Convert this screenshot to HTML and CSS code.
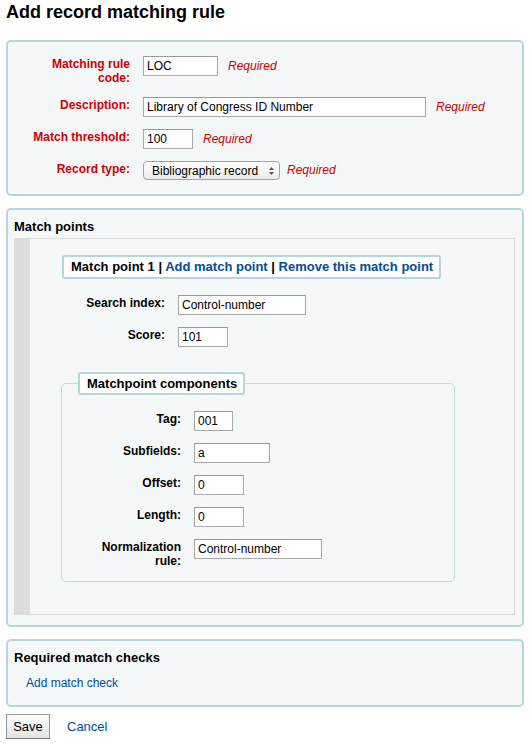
FILE: index.html
```html
<!DOCTYPE html>
<html>
<head>
<meta charset="utf-8">
<title>Add record matching rule</title>
<link rel="stylesheet" href="styles.css">
</head>
<body>
<h1 class="page-title">Add record matching rule</h1>

<div class="panel panel-rule">
  <ol class="rows rows-rule">
    <li class="row"><label class="lbl lbl-req">Matching rule code:</label><input class="inp w-code" type="text" value="LOC"><span class="required">Required</span></li>
    <li class="row"><label class="lbl lbl-req">Description:</label><input class="inp w-desc" type="text" value="Library of Congress ID Number"><span class="required">Required</span></li>
    <li class="row"><label class="lbl lbl-req">Match threshold:</label><input class="inp w-num" type="text" value="100"><span class="required">Required</span></li>
    <li class="row"><label class="lbl lbl-req">Record type:</label><span class="select"><span>Bibliographic record</span><svg class="select-arrows" width="5" height="8" viewBox="0 0 5 8"><polygon points="0,3 2.5,0 5,3" fill="#555"/><polygon points="0,5 2.5,8 5,5" fill="#555"/></svg></span><span class="required req-select">Required</span></li>
  </ol>
</div>

<div class="panel panel-points">
  <h3 class="panel-title">Match points</h3>
  <div class="mp-box">
    <div class="mp-heading">Match point 1 | <a href="#" class="link">Add match point</a> | <a href="#" class="link">Remove this match point</a></div>
    <ol class="rows rows-mp">
      <li class="row"><label class="lbl">Search index:</label><input class="inp w-index" type="text" value="Control-number"></li>
      <li class="row"><label class="lbl">Score:</label><input class="inp w-num" type="text" value="101"></li>
    </ol>
    <fieldset class="components">
      <legend class="comp-legend">Matchpoint components</legend>
      <ol class="rows rows-comp">
        <li class="row"><label class="lbl">Tag:</label><input class="inp w-tag" type="text" value="001"></li>
        <li class="row"><label class="lbl">Subfields:</label><input class="inp w-sub" type="text" value="a"></li>
        <li class="row"><label class="lbl">Offset:</label><input class="inp w-num" type="text" value="0"></li>
        <li class="row"><label class="lbl">Length:</label><input class="inp w-num" type="text" value="0"></li>
        <li class="row"><label class="lbl">Normalization rule:</label><input class="inp w-index" type="text" value="Control-number"></li>
      </ol>
    </fieldset>
  </div>
</div>

<div class="panel panel-checks">
  <h3 class="panel-title">Required match checks</h3>
  <a href="#" class="link add-check">Add match check</a>
</div>

<div class="actions">
  <button class="btn" type="button">Save</button>
  <a href="#" class="link cancel">Cancel</a>
</div>
</body>
</html>
```

FILE: styles.css
```css
* { box-sizing: border-box; }

body {
  margin: 0;
  padding: 1px 8px 0 6px;
  font-family: "Liberation Sans", Arial, sans-serif;
  font-size: 12px;
  color: #000;
  background: #fff;
}

.page-title {
  margin: 0 0 17px;
  font-size: 18px;
  line-height: 22px;
  font-weight: bold;
}

.panel {
  border: 2px solid #b6d7da;
  border-radius: 5px;
  background: #f4f8f9;
  margin: 0 0 12px;
}

.panel-rule { padding: 14px 0 2px 20px; }
.panel-points { padding: 9px 7px 10px 6px; }
.panel-checks { padding: 9px 0 14px 6px; margin-bottom: 7px; }

.panel-title {
  margin: 0;
  font-size: 13px;
  line-height: 16px;
  font-weight: bold;
}

.rows { list-style: none; margin: 0; padding: 0; }

.row {
  display: flex;
  align-items: flex-start;
  margin: 0 0 12px;
}

.lbl {
  width: 95px;
  flex: none;
  text-align: right;
  font-weight: bold;
  font-size: 12px;
  line-height: 14px;
  padding-top: 1px;
  margin-right: 13px;
}

.rows-rule .lbl { width: 102px; }

.lbl-req { color: #cc0000; }

.inp {
  height: 20px;
  border: 1px solid #a9a9a9;
  border-top-color: #999;
  background: #fff;
  font-family: "Liberation Sans", Arial, sans-serif;
  font-size: 12px;
  color: #000;
  padding: 0 3px;
  margin: 0;
  flex: none;
}

.w-code { width: 75px; }
.w-desc { width: 283px; }
.w-num { width: 50px; }
.w-index { width: 128px; }
.w-tag { width: 39px; }
.w-sub { width: 76px; }

.required {
  color: #cc0000;
  font-style: italic;
  font-size: 12px;
  line-height: 20px;
  margin-left: 10px;
}

.req-select { margin-left: 7px; line-height: 19px; }

.select {
  display: flex;
  align-items: center;
  justify-content: space-between;
  width: 137px;
  height: 19px;
  padding: 0 5px 0 8px;
  border: 1px solid #a3a3a3;
  border-radius: 4px;
  background: linear-gradient(#ffffff, #ebebeb);
  font-size: 12px;
  flex: none;
}

.select-arrows { display: block; }

.mp-box {
  margin-top: 3px;
  border: 1px solid #dadada;
  border-left: 16px solid #dcdcdc;
  padding: 16px 0 0;
}

.mp-heading {
  display: inline-block;
  margin-left: 32px;
  margin-bottom: 16px;
  padding: 0 6px 0 7px;
  border: 2px solid #b6d7da;
  border-radius: 3px;
  background: #fff;
  font-size: 13px;
  font-weight: bold;
  line-height: 20px;
}

.rows-mp { padding-left: 40px; }

.link { color: #004d99; text-decoration: none; }

.components {
  width: 394px;
  margin: 25px 0 32px 31px;
  padding: 16px 0 1px 16px;
  border: 1px solid #bcdcdf;
  border-radius: 5px;
  min-inline-size: 0;
}

.comp-legend {
  padding: 0 6px 0 7px;
  border: 2px solid #b6d7da;
  border-radius: 3px;
  background: #fff;
  font-size: 13px;
  font-weight: bold;
  line-height: 19px;
}

.rows-comp { padding-left: 8px; }

.add-check {
  display: block;
  margin: 10px 0 0 12px;
  font-size: 12px;
  line-height: 15px;
}

.actions {
  display: flex;
  align-items: center;
  gap: 17px;
}

.btn {
  width: 44px;
  height: 25px;
  padding: 0;
  border: 1px solid #9a9a9a;
  border-bottom-color: #777;
  border-radius: 0;
  background: linear-gradient(#ffffff, #e3e3e3);
  font-family: "Liberation Sans", Arial, sans-serif;
  font-size: 13px;
  color: #000;
}

.cancel { font-size: 13px; }
```
